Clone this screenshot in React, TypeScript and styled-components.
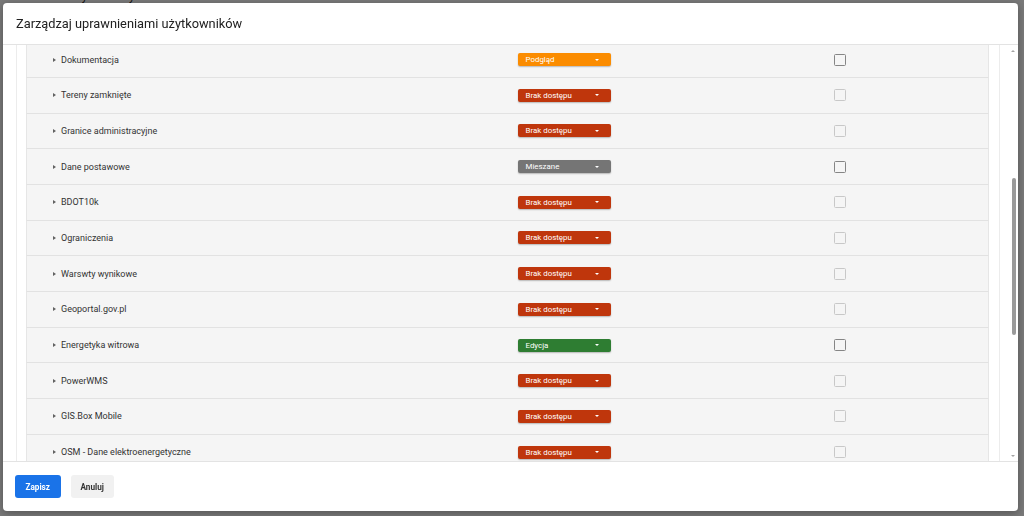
import React, { useCallback, useLayoutEffect, useRef, useState } from 'react';
import styled, { createGlobalStyle } from 'styled-components';

type Access = 'podglad' | 'brak' | 'mieszane' | 'edycja';

interface Item {
  name: string;
  access: Access;
}

const ACCESS: Record<Access, { label: string; color: string }> = {
  podglad: { label: 'Podgląd', color: '#fb8c00' },
  brak: { label: 'Brak dostępu', color: '#bf360c' },
  mieszane: { label: 'Mieszane', color: '#757575' },
  edycja: { label: 'Edycja', color: '#2e7d32' },
};

const ITEMS: Item[] = [
  { name: 'Podkłady mapowe', access: 'podglad' },
  { name: 'Ortofotomapa', access: 'podglad' },
  { name: 'Działki ewidencyjne', access: 'brak' },
  { name: 'Budynki', access: 'brak' },
  { name: 'Sieci uzbrojenia terenu', access: 'brak' },
  { name: 'Plany miejscowe', access: 'brak' },
  { name: 'Obszary chronione', access: 'brak' },
  { name: 'Hydrografia', access: 'brak' },
  { name: 'Drogi', access: 'brak' },
  { name: 'Dokumentacja', access: 'podglad' },
  { name: 'Tereny zamknięte', access: 'brak' },
  { name: 'Granice administracyjne', access: 'brak' },
  { name: 'Dane postawowe', access: 'mieszane' },
  { name: 'BDOT10k', access: 'brak' },
  { name: 'Ograniczenia', access: 'brak' },
  { name: 'Warswty wynikowe', access: 'brak' },
  { name: 'Geoportal.gov.pl', access: 'brak' },
  { name: 'Energetyka witrowa', access: 'edycja' },
  { name: 'PowerWMS', access: 'brak' },
  { name: 'GIS.Box Mobile', access: 'brak' },
  { name: 'OSM - Dane elektroenergetyczne', access: 'brak' },
  { name: 'OSM - Dane drogowe', access: 'brak' },
  { name: 'Raporty', access: 'brak' },
  { name: 'Analizy przestrzenne', access: 'brak' },
  { name: 'Pomiary', access: 'brak' },
  { name: 'Administracja', access: 'brak' },
  { name: 'Ustawienia', access: 'brak' },
  { name: 'Historia zmian', access: 'brak' },
  { name: 'Eksport danych', access: 'brak' },
];

const ARROW_SIZE = 11;

const GlobalStyle = createGlobalStyle`
  html, body { margin: 0; padding: 0; }
  body {
    font-family: Roboto, "Noto Sans", Arial, sans-serif;
    background: #f2f2f2;
    overflow: hidden;
  }
  * { box-sizing: border-box; }
`;

const BackgroundPage = styled.div`
  height: 516px;
  padding-left: 68px;
  overflow: hidden;
`;

const PageHeading = styled.h1`
  margin: -11px 0 0;
  font-size: 12px;
  line-height: 14px;
  font-weight: 400;
  color: #222;
`;

const Backdrop = styled.div`
  position: fixed;
  inset: 0;
  background: rgba(0, 0, 0, 0.5);
`;

const Dialog = styled.div`
  position: fixed;
  top: 3px;
  left: 3px;
  width: 1015px;
  height: 508px;
  background: #fff;
  border-radius: 4px;
  box-shadow: 0 2px 8px rgba(0, 0, 0, 0.3);
  display: flex;
  flex-direction: column;
  overflow: hidden;
`;

const Header = styled.header`
  height: 42px;
  flex: none;
  display: flex;
  align-items: center;
  padding: 0 13px;
  border-bottom: 1px solid #e3e3e3;
`;

const Title = styled.h2`
  margin: 0;
  font-size: 12.8px;
  font-weight: 400;
  color: #212121;
`;

const Body = styled.div`
  flex: 1;
  min-height: 0;
  display: flex;
`;

const Viewport = styled.div`
  flex: 1;
  min-width: 0;
  overflow-y: auto;
  scrollbar-width: none;
  &::-webkit-scrollbar { display: none; }
`;

const ScrollRail = styled.div`
  width: 11px;
  flex: none;
  display: flex;
  flex-direction: column;
  background: #fff;
`;

const RailArrow = styled.div<{ $down?: boolean }>`
  height: ${ARROW_SIZE}px;
  flex: none;
  display: flex;
  align-items: center;
  justify-content: center;
  &::before {
    content: '';
    width: 0;
    height: 0;
    border-left: 2.5px solid transparent;
    border-right: 2.5px solid transparent;
    ${(p) =>
      p.$down
        ? 'border-top: 2.5px solid #a3a3a3;'
        : 'border-bottom: 2.5px solid #a3a3a3;'}
  }
`;

const RailTrack = styled.div`
  flex: 1;
  display: flex;
  flex-direction: column;
  align-items: center;
  padding-left: 2px;
`;

const RailThumb = styled.div`
  width: 4px;
  border-radius: 2px;
  background: #9a9a9a;
  flex: none;
`;

const Tree = styled.div`
  margin: 0 7px 0 13px;
  padding: 0 10px 10px 9px;
  border-left: 1px solid #ececec;
  border-right: 1px solid #ececec;
`;

const Row = styled.div`
  display: grid;
  grid-template-columns: 491px 93px 1fr 154px;
  align-items: center;
  height: 35.7px;
  background: #f5f5f5;
  border-left: 1px solid #e6e6e6;
  border-right: 1px solid #e6e6e6;
  border-bottom: 1px solid #e2e2e2;
`;

const NameCell = styled.div`
  display: flex;
  align-items: center;
  gap: 5px;
  padding-left: 26px;
  font-size: 9px;
  color: #333;
  white-space: nowrap;
`;

const Caret = styled.span`
  width: 0;
  height: 0;
  border-top: 2.5px solid transparent;
  border-bottom: 2.5px solid transparent;
  border-left: 3px solid #616161;
`;

const AccessSelect = styled.button<{ $color: string }>`
  all: unset;
  box-sizing: border-box;
  display: flex;
  align-items: center;
  justify-content: space-between;
  width: 93px;
  height: 13px;
  padding: 0 12px 0 7.5px;
  border-radius: 2px;
  background: ${(p) => p.$color};
  color: #fff;
  font-family: Roboto, "Noto Sans", Arial, sans-serif;
  font-size: 7.9px;
  font-weight: 400;
  box-shadow: 0 1px 1.5px rgba(0, 0, 0, 0.25);
  cursor: pointer;
`;

const SelectArrow = styled.span`
  width: 0;
  height: 0;
  border-left: 2.5px solid transparent;
  border-right: 2.5px solid transparent;
  border-top: 2.5px solid #fff;
`;

const Check = styled.span<{ $enabled: boolean }>`
  grid-column: 4;
  width: 12px;
  height: 12px;
  border: 1.5px solid ${(p) => (p.$enabled ? '#858585' : '#c8c8c8')};
  border-radius: 1.5px;
`;

const Footer = styled.footer`
  height: 50px;
  flex: none;
  display: flex;
  align-items: center;
  gap: 10px;
  padding: 0 12px;
  border-top: 1px solid #e3e3e3;
`;

const Button = styled.button<{ $primary?: boolean }>`
  all: unset;
  box-sizing: border-box;
  height: 23px;
  padding: 0 ${(p) => (p.$primary ? '10.5px' : '10px')};
  border-radius: 3px;
  background: ${(p) => (p.$primary ? '#1a73e8' : '#f1f1f1')};
  color: ${(p) => (p.$primary ? '#fff' : '#333')};
  font-family: Roboto, "Noto Sans", Arial, sans-serif;
  font-size: 8.2px;
  font-weight: 700;
  display: flex;
  align-items: center;
  cursor: pointer;
`;

export default function App() {
  const viewportRef = useRef<HTMLDivElement>(null);
  const [thumb, setThumb] = useState({ top: 0, height: 0 });

  const updateThumb = useCallback(() => {
    const el = viewportRef.current;
    if (!el) return;
    const track = el.clientHeight - ARROW_SIZE * 2;
    const height = Math.max(20, (track * el.clientHeight) / el.scrollHeight);
    const maxScroll = el.scrollHeight - el.clientHeight;
    const top = maxScroll > 0 ? (el.scrollTop / maxScroll) * (track - height) : 0;
    setThumb({ top, height });
  }, []);

  useLayoutEffect(() => {
    if (viewportRef.current) viewportRef.current.scrollTop = 324.3;
    updateThumb();
  }, [updateThumb]);

  return (
    <>
      <GlobalStyle />
      <BackgroundPage>
        <PageHeading>Użytkownicy</PageHeading>
      </BackgroundPage>
      <Backdrop />
      <Dialog role="dialog" aria-label="Zarządzaj uprawnieniami użytkowników">
        <Header>
          <Title>Zarządzaj uprawnieniami użytkowników</Title>
        </Header>
        <Body>
          <Viewport ref={viewportRef} onScroll={updateThumb}>
            <Tree>
              {ITEMS.map((item) => {
                const a = ACCESS[item.access];
                return (
                  <Row key={item.name}>
                    <NameCell>
                      <Caret />
                      {item.name}
                    </NameCell>
                    <AccessSelect $color={a.color} type="button">
                      {a.label}
                      <SelectArrow />
                    </AccessSelect>
                    <Check $enabled={item.access !== 'brak'} />
                  </Row>
                );
              })}
            </Tree>
          </Viewport>
          <ScrollRail aria-hidden="true">
            <RailArrow />
            <RailTrack>
              <RailThumb style={{ marginTop: thumb.top, height: thumb.height }} />
            </RailTrack>
            <RailArrow $down />
          </ScrollRail>
        </Body>
        <Footer>
          <Button $primary type="button">Zapisz</Button>
          <Button type="button">Anuluj</Button>
        </Footer>
      </Dialog>
    </>
  );
}
